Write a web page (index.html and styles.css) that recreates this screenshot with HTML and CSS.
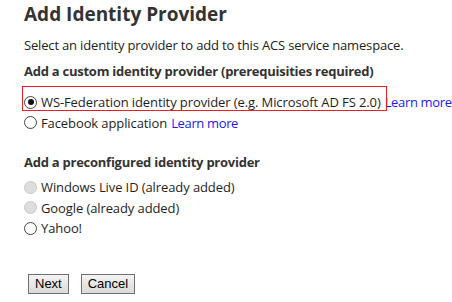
FILE: index.html
```html
<!DOCTYPE html>
<html>
<head>
<meta charset="utf-8">
<link rel="stylesheet" href="styles.css">
</head>
<body>
<div class="page">
  <h1 class="title">Add Identity Provider</h1>
  <p class="intro">Select an identity provider to add to this ACS service namespace.</p>
  <h2 class="section">Add a custom identity provider (prerequisities required)</h2>
  <div class="options first">
    <div class="opt highlighted">
      <span class="radio checked"></span><span class="label">WS-Federation identity provider (e.g. Microsoft AD FS 2.0)</span><a class="link" href="#">Learn more</a>
    </div>
    <div class="opt">
      <span class="radio"></span><span class="label">Facebook application</span><a class="link" href="#">Learn more</a>
    </div>
  </div>
  <h2 class="section second">Add a preconfigured identity provider</h2>
  <div class="options">
    <div class="opt"><span class="radio disabled"></span><span class="label">Windows Live ID (already added)</span></div>
    <div class="opt"><span class="radio disabled"></span><span class="label">Google (already added)</span></div>
    <div class="opt"><span class="radio"></span><span class="label">Yahoo!</span></div>
  </div>
  <div class="buttons">
    <button class="btn">Next</button>
    <button class="btn">Cancel</button>
  </div>
</div>
</body>
</html>
```

FILE: styles.css
```css
html, body {
  margin: 0;
  padding: 0;
  background: #ffffff;
}
.page {
  padding: 0 0 0 24px;
  font-family: "Open Sans", "Noto Sans", sans-serif;
  color: #1e1e1e;
}
.title {
  margin: 0;
  padding-top: 1px;
  font-size: 19px;
  line-height: 27px;
  font-weight: 700;
  color: #333333;
}
.intro {
  margin: 8px 0 0 0;
  font-size: 13px;
  line-height: 18px;
  letter-spacing: -0.17px;
  color: #222222;
}
.section {
  margin: 8px 0 0 0;
  font-size: 13px;
  line-height: 18px;
  font-weight: 700;
  letter-spacing: -0.25px;
  color: #333333;
}
.section.second {
  margin-top: 20px;
}
.options {
  margin-top: 6px;
  display: flex;
  flex-direction: column;
}
.options.first {
  margin-top: 12px;
}
.opt {
  display: flex;
  align-items: center;
  height: 20.5px;
  font-size: 13px;
  letter-spacing: -0.1px;
  white-space: nowrap;
}
.highlighted {
  position: relative;
}
.highlighted::before {
  content: "";
  position: absolute;
  left: -2px;
  top: -6px;
  width: 363px;
  height: 23px;
  border: 1px solid #e8202a;
  pointer-events: none;
}
.radio {
  width: 11px;
  height: 11px;
  border: 1px solid #444444;
  border-radius: 50%;
  background: #ffffff;
  margin-right: 4px;
  position: relative;
  flex: none;
}
.radio.checked::after {
  content: "";
  position: absolute;
  left: 2.5px;
  top: 2.5px;
  width: 6px;
  height: 6px;
  border-radius: 50%;
  background: #111111;
}
.radio.disabled {
  background: #dddddd;
  border-color: #c8c8c8;
}
.label {
  color: #1e1e1e;
}
.link {
  color: #1a1aee;
  text-decoration: none;
  margin-left: 4px;
  letter-spacing: -0.35px;
}
.buttons {
  margin-top: 35px;
  padding-left: 4px;
  display: flex;
  gap: 12px;
}
.btn {
  font-family: "Liberation Sans", Arial, sans-serif;
  font-size: 13px;
  height: 20px;
  padding: 0 6px;
  border: 1px solid #707070;
  border-radius: 0;
  background: linear-gradient(#f4f4f4, #dadada);
  color: #000000;
  line-height: 18px;
}
```
